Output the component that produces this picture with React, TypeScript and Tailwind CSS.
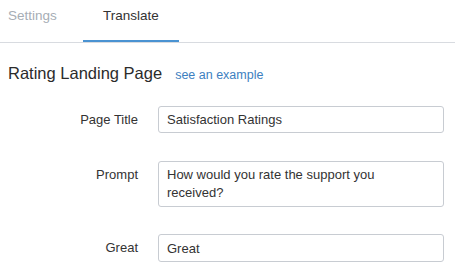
import React from "react";

function Row({ label, children }: { label: string; children: React.ReactNode }) {
  return (
    <div className="flex items-start">
      <span className="w-[130px] shrink-0 pt-[5px] text-right text-[13px] leading-[17px] text-[#333]">
        {label}
      </span>
      <div className="ml-[20px] flex-1">{children}</div>
    </div>
  );
}

const inputCls =
  "block w-full h-[27px] rounded-[3px] border border-[#c8ccd2] bg-white px-[8px] py-[4px] text-[13px] leading-[17px] text-[#333] outline-none";

export default function App() {
  return (
    <div
      className="h-[273px] w-[455px] overflow-hidden bg-white text-[#333]"
      style={{ fontFamily: '"Liberation Sans", Arial, sans-serif' }}
    >
      <div className="flex h-[43px] border-b border-[#d8dbe0]">
        <div className="h-[42px] pl-[8px] pt-[6px] text-[13.5px] leading-[20px] text-[#a6adb5]">
          Settings
        </div>
        <div className="ml-[26px] flex h-[42px] w-[96px] justify-center border-b-2 border-[#4a93d2] pt-[6px] text-[13.5px] leading-[20px] text-[#333]">
          Translate
        </div>
      </div>

      <div className="pl-[8px] pr-[11px]">
        <div className="mt-[20px] flex h-[20px] items-baseline">
          <h1 className="text-[16.5px] leading-[20px] text-[#2b2b2b]">Rating Landing Page</h1>
          <a href="#" className="ml-[13px] text-[12.5px] leading-[20px] text-[#3d7fbf]">
            see an example
          </a>
        </div>

        <div className="mt-[23px] flex flex-col">
          <Row label="Page Title">
            <input className={inputCls} defaultValue="Satisfaction Ratings" />
          </Row>
          <div className="mt-[28px]">
            <Row label="Prompt">
              <textarea
                className="block h-[46px] w-full resize-none overflow-hidden rounded-[3px] border border-[#c8ccd2] bg-white py-[4px] pl-[8px] pr-[24px] text-[13px] leading-[18px] text-[#333] outline-none"
                defaultValue="How would you rate the support you received?"
              />
            </Row>
          </div>
          <div className="mt-[27px]">
            <Row label="Great">
              <input className={inputCls + " h-[28px]"} defaultValue="Great" />
            </Row>
          </div>
        </div>
      </div>
    </div>
  );
}
